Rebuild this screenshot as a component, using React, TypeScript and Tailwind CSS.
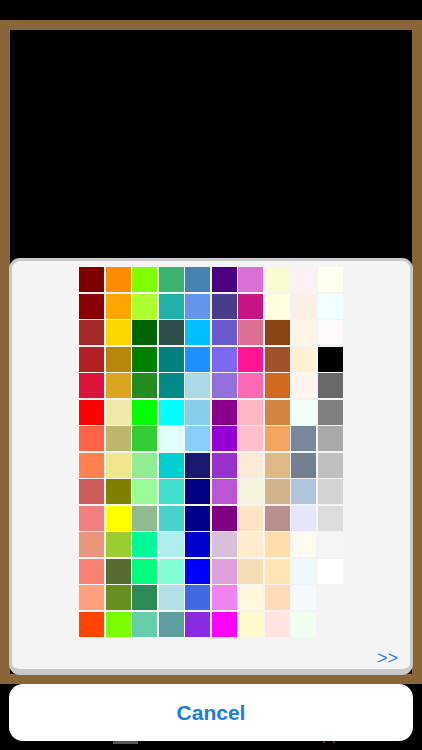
import React from "react";

const COLORS: string[][] = [
  ["#800000", "#FF8C00", "#7FFF00", "#3CB371", "#4682B4", "#4B0082", "#DA70D6", "#FAFAD2", "#FFF0F5", "#FFFFF0"],
  ["#8B0000", "#FFA500", "#ADFF2F", "#20B2AA", "#6495ED", "#483D8B", "#C71585", "#FFFFE0", "#FAF0E6", "#F0FFFF"],
  ["#A52A2A", "#FFD700", "#006400", "#2F4F4F", "#00BFFF", "#6A5ACD", "#DB7093", "#8B4513", "#FDF5E6", "#FFFAFA"],
  ["#B22222", "#B8860B", "#008000", "#008080", "#1E90FF", "#7B68EE", "#FF1493", "#A0522D", "#FFEFD5", "#000000"],
  ["#DC143C", "#DAA520", "#228B22", "#008B8B", "#ADD8E6", "#9370DB", "#FF69B4", "#D2691E", "#FFF5EE", "#696969"],
  ["#FF0000", "#EEE8AA", "#00FF00", "#00FFFF", "#87CEEB", "#8B008B", "#FFB6C1", "#CD853F", "#F5FFFA", "#808080"],
  ["#FF6347", "#BDB76B", "#32CD32", "#E0FFFF", "#87CEFA", "#9400D3", "#FFC0CB", "#F4A460", "#778899", "#A9A9A9"],
  ["#FF7F50", "#F0E68C", "#90EE90", "#00CED1", "#191970", "#9932CC", "#FAEBD7", "#DEB887", "#708090", "#C0C0C0"],
  ["#CD5C5C", "#808000", "#98FB98", "#40E0D0", "#000080", "#BA55D3", "#F5F5DC", "#D2B48C", "#B0C4DE", "#D3D3D3"],
  ["#F08080", "#FFFF00", "#8FBC8F", "#48D1CC", "#00008B", "#800080", "#FFE4C4", "#BC8F8F", "#E6E6FA", "#DCDCDC"],
  ["#E9967A", "#9ACD32", "#00FA9A", "#AFEEEE", "#0000CD", "#D8BFD8", "#FFEBCD", "#FFDEAD", "#FFFAF0", "#F5F5F5"],
  ["#FA8072", "#556B2F", "#00FF7F", "#7FFFD4", "#0000FF", "#DDA0DD", "#F5DEB3", "#FFE4B5", "#F0F8FF", "#FFFFFF"],
  ["#FFA07A", "#6B8E23", "#2E8B57", "#B0E0E6", "#4169E1", "#EE82EE", "#FFF8DC", "#FFDAB9", "#F8F8FF", ""],
  ["#FF4500", "#7CFC00", "#66CDAA", "#5F9EA0", "#8A2BE2", "#FF00FF", "#FFFACD", "#FFE4E1", "#F0FFF0", ""],
];

export default function App() {
  return (
    <div
      className="relative h-[750px] w-[422px] overflow-hidden bg-black"
      style={{ fontFamily: '"Liberation Sans", Arial, sans-serif' }}
    >
      <div className="pt-[20px]">
        <div className="h-[664px] border-[10px] border-[#8a6537] bg-black" />
      </div>
      <div className="flex items-start pl-[113px] pt-[57px]">
        <div className="h-[3px] w-[25px] bg-[#555555]" />
        <div className="ml-[185px] mt-[0px] flex gap-[8px]">
          <div className="h-[2px] w-[2px] rounded-full bg-[#c0201e]" />
          <div className="h-[2px] w-[2px] rounded-full bg-[#c0201e]" />
        </div>
      </div>

      <div className="absolute inset-x-[9px] bottom-[9px] flex flex-col gap-[9px]">
        <div className="flex h-[417px] flex-col rounded-[11px] border-[3px] border-b-[6px] border-[#c9c9c9] bg-[#f4f4f4]">
          <div className="flex justify-center pt-[6px]">
            <div className="grid grid-cols-[repeat(10,25px)] gap-[1.5px]">
              {COLORS.flat().map((c, i) => (
                <div
                  key={i}
                  className="h-[25px] w-[25px]"
                  style={{ backgroundColor: c || "transparent" }}
                />
              ))}
            </div>
          </div>
          <div className="mt-[10px] flex justify-end pr-[12px]">
            <span className="text-[18px] leading-[22px] text-[#2a7fe0]">&gt;&gt;</span>
          </div>
        </div>
        <button className="flex h-[57px] items-center justify-center rounded-[14px] bg-white text-[21px] font-bold text-[#1a7ce2]">
          Cancel
        </button>
      </div>
    </div>
  );
}
